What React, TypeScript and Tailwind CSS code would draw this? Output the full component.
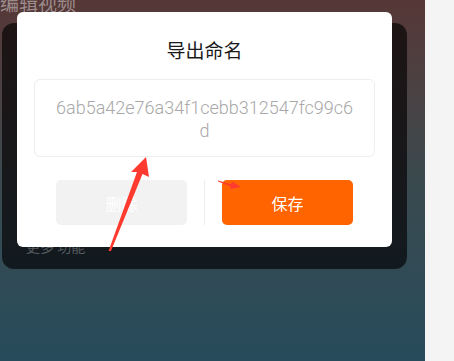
import React from "react";

const cjk = { fontFamily: '"Noto Sans CJK SC", "Noto Sans", sans-serif' };
const latin = { fontFamily: 'Roboto, "Noto Sans CJK SC", sans-serif' };

function Arrows() {
  // red annotation arrows drawn on top of the screenshot
  return (
    <svg
      className="pointer-events-none absolute left-0 top-0"
      width="425"
      height="361"
      viewBox="0 0 425 361"
    >
      <polygon
        points="146,157 149,177 142.5,174 111,251 108.5,251 137,172 131,172"
        fill="#ff3b30"
      />
      <polygon
        points="218,180.6 231,184.3 232,181.5 241,187 230,189 230.8,186.6 218,181.6"
        fill="#ff3b30"
      />
    </svg>
  );
}

function ExportDialog() {
  return (
    <div className="absolute left-[17px] top-[12px] flex h-[235px] w-[375px] flex-col items-center rounded-[6px] bg-white">
      <div className="pt-[25px] text-[19px] leading-[26px] text-[#1a1a1a]" style={cjk}>
        导出命名
      </div>
      <div
        className="mt-[16px] flex h-[78px] w-[341px] items-center justify-center rounded-[6px] border border-[#eeeeee] px-[17px] pt-[2px] text-center text-[18px] font-light leading-[23px] text-[#a8a8a8] break-all"
        style={latin}
      >
        6ab5a42e76a34f1cebb312547fc99c6d
      </div>
      <div className="mt-[23px] flex items-center gap-[17px]">
        <button
          className="h-[45px] w-[131px] rounded-[5px] bg-[#f2f2f2] text-[16px] text-white"
          style={cjk}
        >
          删除
        </button>
        <div className="h-[45px] w-px bg-[#eeeeee]" />
        <button
          className="h-[45px] w-[131px] rounded-[5px] bg-[#ff6400] text-[16px] text-white"
          style={cjk}
        >
          保存
        </button>
      </div>
    </div>
  );
}

export default function App() {
  return (
    <div className="flex h-[361px] w-[454px] overflow-hidden">
      <div className="relative h-full w-[425px] bg-gradient-to-b from-[#563737] via-[#3a4a4f] to-[#264b5b]">
        <div className="-mt-[9px] pl-0 text-[19px] leading-[24px] text-[#9b8b8b]" style={cjk}>
          编辑视频
        </div>
        <div className="ml-[2px] mt-[8px] h-[246px] w-[405px] rounded-[12px] bg-gradient-to-b from-[#1d1414] to-[#121a1f] pl-[24px] pt-[213px]">
          <div className="text-[14px] leading-[20px] text-[#555b5f]" style={cjk}>
            更多 功能
          </div>
        </div>
        <ExportDialog />
        <Arrows />
      </div>
      <div className="h-full flex-1 bg-[#f4f4f4]" />
    </div>
  );
}
